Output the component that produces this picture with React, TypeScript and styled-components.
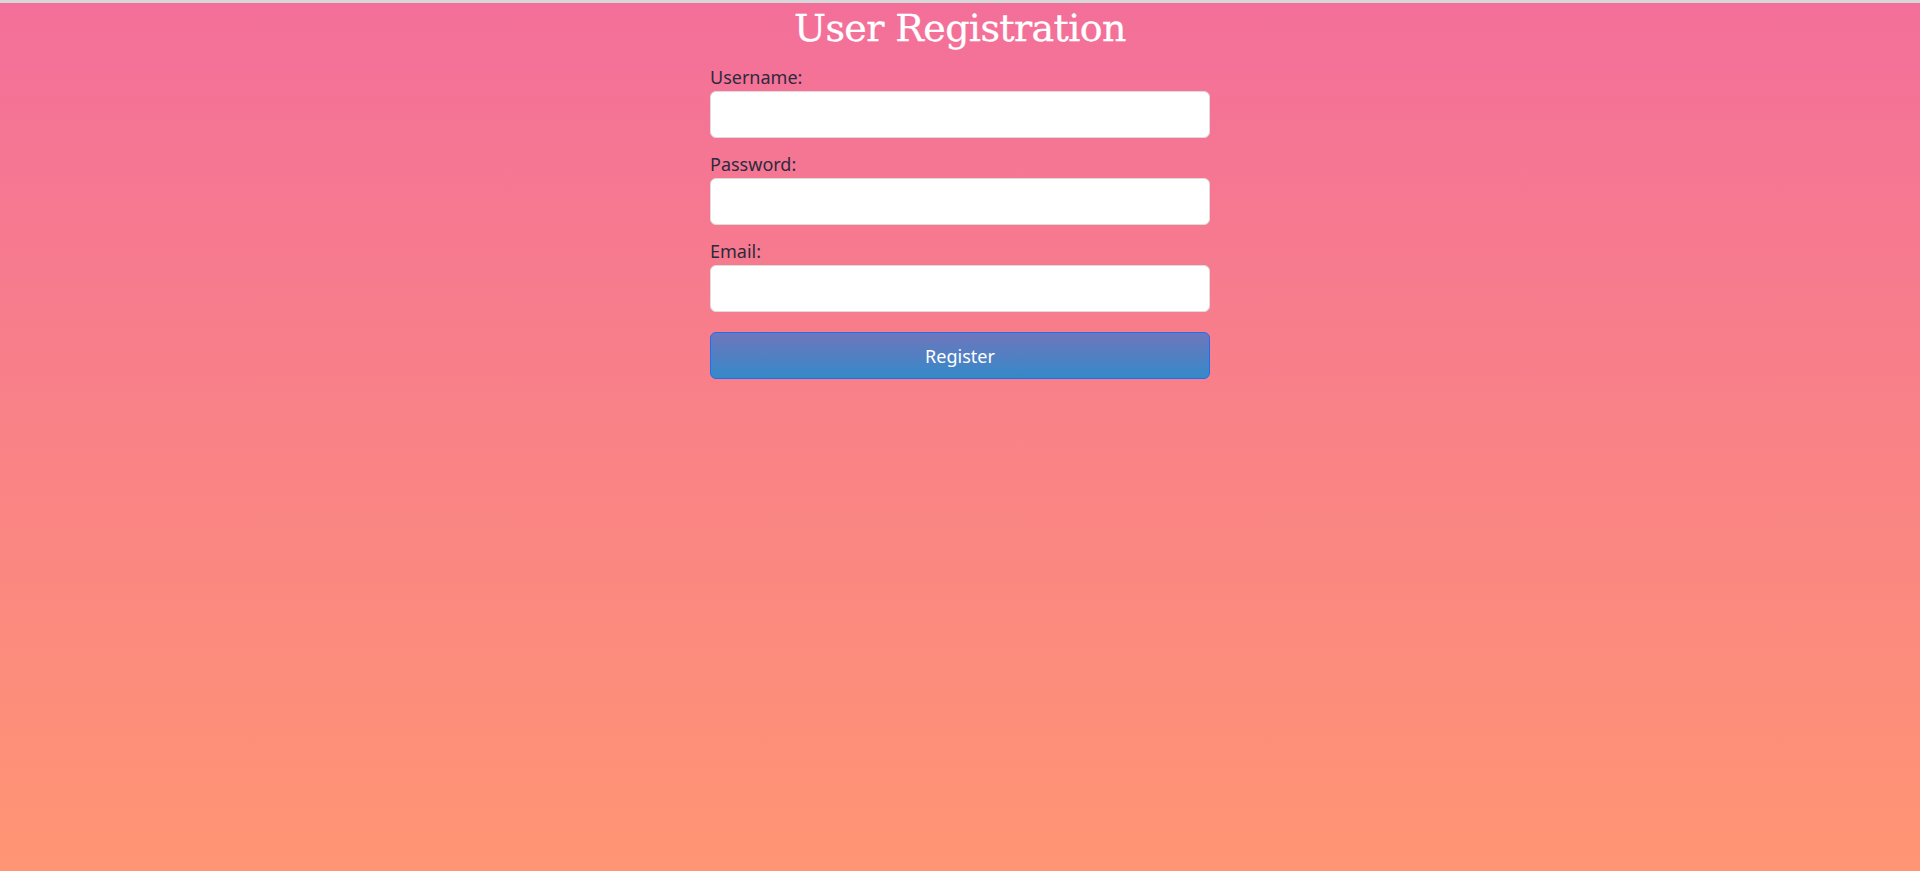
import React from "react";
import styled, { createGlobalStyle } from "styled-components";

const GlobalStyle = createGlobalStyle`
  * { box-sizing: border-box; }
  html, body { margin: 0; padding: 0; }
  body { font-family: "Noto Sans", "Open Sans", sans-serif; }
`;

const Page = styled.div`
  min-height: 871px;
  background: linear-gradient(180deg, #f36f9a 0%, #ff9573 100%);
  display: flex;
  flex-direction: column;
`;

const TopStrip = styled.div`
  height: 3px;
  background: #d7d7d9;
`;

const Content = styled.main`
  display: flex;
  flex-direction: column;
  align-items: center;
`;

const Title = styled.h1`
  margin: 1px 0 0;
  font-family: "DejaVu Serif", "Liberation Serif", serif;
  font-weight: 400;
  font-size: 38px;
  line-height: 48px;
  color: #ffffff;
  letter-spacing: -0.6px;
  -webkit-text-stroke: 0.3px #ffffff;
`;

const Form = styled.form`
  width: 500px;
  display: flex;
  flex-direction: column;
  margin-top: 11px;
`;

const Field = styled.div`
  display: flex;
  flex-direction: column;
  gap: 2px;
  margin-bottom: 12px;
`;

const Label = styled.label`
  font-size: 18px;
  line-height: 24px;
  padding-top: 2px;
  color: #2c2a3e;
`;

const Input = styled.input`
  height: 47px;
  width: 100%;
  border: 1px solid #dcdcdc;
  border-radius: 6px;
  background: #ffffff;
  padding: 0 12px;
  font-size: 17px;
  font-family: inherit;
  outline: none;
`;

const Button = styled.button`
  margin-top: 8px;
  height: 47px;
  width: 100%;
  border: 1px solid #1e6df2;
  border-radius: 6px;
  background: linear-gradient(180deg, #6f76bc 0%, #3589c9 100%);
  color: #ffffff;
  font-family: inherit;
  font-size: 18px;
  cursor: pointer;
`;

export default function App() {
  return (
    <>
      <GlobalStyle />
      <Page>
        <TopStrip />
        <Content>
          <Title>User Registration</Title>
          <Form onSubmit={(e) => e.preventDefault()}>
            <Field>
              <Label htmlFor="username">Username:</Label>
              <Input id="username" type="text" />
            </Field>
            <Field>
              <Label htmlFor="password">Password:</Label>
              <Input id="password" type="password" />
            </Field>
            <Field>
              <Label htmlFor="email">Email:</Label>
              <Input id="email" type="email" />
            </Field>
            <Button type="submit">Register</Button>
          </Form>
        </Content>
      </Page>
    </>
  );
}
